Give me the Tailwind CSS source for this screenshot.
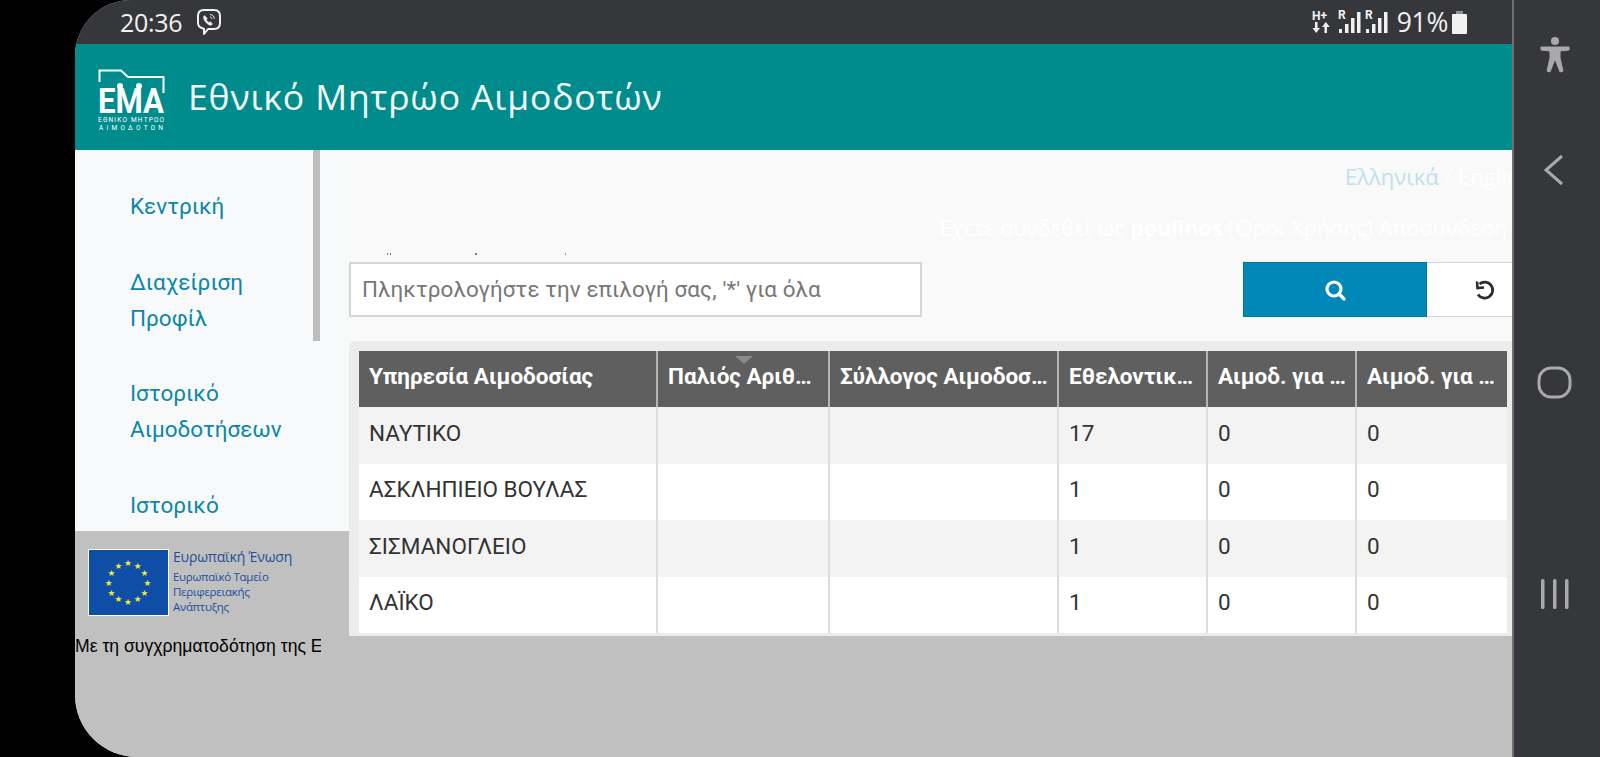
<!DOCTYPE html>
<html lang="el">
<head>
<meta charset="utf-8">
<title>Εθνικό Μητρώο Αιμοδοτών</title>
<script src="https://cdn.jsdelivr.net/npm/@tailwindcss/browser@4"></script>
</head>
<body class="bg-black overflow-hidden font-['Roboto',sans-serif]">
<div class="flex h-[757px] w-[1600px]">
  <div class="w-[75px] shrink-0 bg-black"></div>

  <div class="w-[1437px] shrink-0 flex flex-col overflow-hidden rounded-tl-[56px] rounded-bl-[62px] bg-[#c0c0c0]">
    <!-- status bar -->
    <div class="h-[44px] shrink-0 bg-[#36373b] flex items-center pl-[45px] pr-[45px] text-[#f1f1f1]">
      <span class="text-[25px] font-['Open_Sans',sans-serif] leading-none tracking-[-0.3px]">20:36</span>
      <svg class="ml-[14px]" width="26" height="28" viewBox="0 0 26 28" fill="none" stroke="#f1f1f1" stroke-width="2"><path d="M8 2h10c4 0 6 2 6 6v7c0 4-2 6-6 6h-6l-4 5v-5.300C4 20 2 18.500 2 15V8c0-4 2-6 6-6z" stroke-linejoin="round"/><path d="M8.500 7.500c-1.200 1-1.200 2.500-.2 4.500s3 4 5 5c1.200 .6 2.300 .2 3.200-1l-2.200-2.200-1.500 .7c-1-.5-2-1.700-2.500-2.700l.9-1.300-2.700-3z" fill="#f1f1f1" stroke-width=".6"/><path d="M14 6.500c2.500 0 4.300 1.800 4.300 4.300M14 9c1 0 1.800 .8 1.800 1.800" stroke-width="1"/></svg>
      <div class="ml-auto flex items-center">
        <svg width="20" height="24" viewBox="0 0 20 24" fill="#f1f1f1"><text x="0" y="10" font-size="12" font-weight="700" font-family="Roboto">H+</text><path d="M3 12h2.500v6h2.500L4.200 23 .5 18H3zM12.500 23h2.500v-6h2.800L13.800 12 10 17h2.500z"/></svg>
        <svg class="ml-[6px]" width="23" height="26" viewBox="0 0 23 26" fill="#f1f1f1"><text x="0" y="10" font-size="12" font-weight="700" font-family="Roboto">R</text><rect x="1" y="20" width="3" height="4"/><rect x="7" y="15" width="3.500" height="9"/><rect x="13" y="9" width="3.500" height="15"/><rect x="19" y="3" width="3.500" height="21"/></svg>
        <svg class="ml-[4px]" width="23" height="26" viewBox="0 0 23 26" fill="#f1f1f1"><text x="0" y="10" font-size="12" font-weight="700" font-family="Roboto">R</text><rect x="1" y="20" width="3" height="4"/><rect x="7" y="15" width="3.500" height="9"/><rect x="13" y="9" width="3.500" height="15"/><rect x="19" y="3" width="3.500" height="21"/></svg>
        <span class="ml-[9px] text-[26.500px] font-['Open_Sans',sans-serif] leading-none tracking-[-0.3px]">91%</span>
        <svg class="ml-[4px]" width="15" height="23" viewBox="0 0 15 23"><rect x="4" y="0" width="7" height="3" fill="#8f8f92"/><rect x="0" y="3" width="15" height="20" rx="1" fill="#f1f1f1"/></svg>
      </div>
    </div>

    <!-- header -->
    <div class="h-[106px] shrink-0 bg-[#008c8c] flex items-center pl-[23px]">
      <svg width="68" height="66" viewBox="0 0 68 66" class="shrink-0">
        <path d="M1.500 18V6.500H23l7 6.500h35.500v16" fill="none" stroke="#fff" stroke-width="2"/>
        <text x="0" y="49" fill="#fff" font-size="35" font-weight="700" font-family="Roboto" textLength="66" lengthAdjust="spacingAndGlyphs">EMA</text>
        <circle cx="22" cy="22" r="3" fill="#fff"/><circle cx="41" cy="22" r="3" fill="#fff"/>
        <text x="0" y="58" fill="#fff" font-size="6.500" font-family="Roboto" textLength="66">ΕΘΝΙΚΟ ΜΗΤΡΩΟ</text>
        <text x="1" y="65.500" fill="#fff" font-size="6.500" font-family="Roboto" textLength="64">ΑΙΜΟΔΟΤΩΝ</text>
      </svg>
      <h1 class="ml-[22px] text-[35.500px] text-[#f2fbfb] font-['Open_Sans',sans-serif] leading-none tracking-[0.85px]">Εθνικό Μητρώο Αιμοδοτών</h1>
    </div>

    <!-- body -->
    <div class="flex flex-1 min-h-0">
      <aside class="w-[274px] shrink-0 flex flex-col">
        <div class="relative h-[381px] shrink-0 bg-[#f8f9fb] overflow-hidden pl-[55px] pt-[38px] text-[#0b87a9] text-[22.500px] leading-[36px]">
          <div class="flex flex-col gap-[39.500px]">
            <a class="block">Κεντρική</a>
            <a class="block">Διαχείριση<br>Προφίλ</a>
            <a class="block">Ιστορικό<br>Αιμοδοτήσεων</a>
            <a class="block">Ιστορικό<br>Αιτήσεων</a>
          </div>
          <div class="absolute left-[238px] top-0 w-[7px] h-[191px] bg-[#bdbdbd]"></div>
        </div>
        <div class="flex-1 bg-[#c0c0c0]">
          <div class="flex pl-[13px] pt-[18px]">
            <svg width="81" height="67" viewBox="0 0 81 67" class="shrink-0 border border-white bg-[#0f4ea6]">
              <g fill="#f5e83a" font-size="9" text-anchor="middle" font-family="DejaVu Sans">
                <text x="40" y="17">★</text><text x="50" y="20">★</text><text x="57" y="27">★</text><text x="60" y="37">★</text><text x="57" y="47">★</text><text x="50" y="54">★</text><text x="40" y="57">★</text><text x="30" y="54">★</text><text x="23" y="47">★</text><text x="20" y="37">★</text><text x="23" y="27">★</text><text x="30" y="20">★</text>
              </g>
            </svg>
            <div class="ml-[4px] text-[#1d4f9c] font-['Open_Sans',sans-serif]">
              <div class="text-[14px] leading-[18px] -mt-[1px] tracking-[-0.2px]">Ευρωπαϊκή Ένωση</div>
              <div class="text-[11.500px] leading-[15px] mt-[3px] tracking-[-0.3px]">Ευρωπαϊκό Ταμείο<br>Περιφερειακής<br>Ανάπτυξης</div>
            </div>
          </div>
          <div class="mt-[20px] w-[246px] overflow-hidden whitespace-nowrap text-[17.600px] leading-[20px] text-black font-['Liberation_Sans',sans-serif]">Με τη συγχρηματοδότηση της Ευρωπαϊκής Ένωσης</div>
        </div>
      </aside>

      <main class="flex-1 min-w-0">
        <div class="relative h-[486px] bg-[#f9f9f9] overflow-hidden">
          <div class="h-[112px] relative">
            <div class="absolute left-[996px] top-[13px] whitespace-nowrap text-[22px] leading-[26px] text-[#bde3e6] font-['Open_Sans',sans-serif]">Ελληνικά <span class="text-white">/ English</span></div>
            <div class="absolute left-[589px] top-[65px] whitespace-nowrap text-[21.600px] leading-[26px] text-white font-['Open_Sans',sans-serif]">Έχετε συνδεθεί ως <b>poulinos</b> (Όροι Χρήσης) Αποσύνδεση</div>
            <div class="absolute left-[38px] top-[103px] w-[4px] h-[2px] border-x border-[#777]"></div>
            <div class="absolute left-[126px] top-[103px] w-[2px] h-[2px] bg-[#777]"></div>
            <div class="absolute left-[216px] top-[103px] w-[1px] h-[2px] bg-[#999]"></div>
          </div>
          <div class="flex h-[55px]">
            <div class="w-[573px] h-full border-2 border-[#d5d5d5] bg-white flex items-center pl-[11px] pt-[1px] text-[22.400px] text-[#777] tracking-[0.1px]">Πληκτρολογήστε την επιλογή σας, '*' για όλα</div>
            <button class="ml-[321px] w-[184px] h-full bg-[#0088b9] border border-[#00779f] flex items-center justify-center pt-[1px]">
              <svg width="22" height="22" viewBox="0 0 22 22" fill="none" stroke="#fff" stroke-width="3.200"><circle cx="10" cy="10" r="7"/><path d="M15 15l5 5" stroke-linecap="round"/></svg>
            </button>
            <button class="flex-1 h-full bg-white border-y border-[#d5d5d5] flex items-center justify-start pl-[47px] pt-[1px]">
              <svg width="22" height="22" viewBox="0 0 22 22" fill="none" stroke="#2b2b2b" stroke-width="2.800"><path d="M5.500 5A8 8 0 1 1 4 15.500"/><path d="M3 2.500l.5 6.500 6.500-.5" stroke-width="2.600"/></svg>
            </button>
          </div>
          <div class="mt-[24px] h-[295px] bg-[#ececec] rounded-tl-[6px] pl-[10px] pt-[10px] relative">
            <table class="table-fixed border-collapse text-[22.500px] text-[#333] w-[1148px]">
              <colgroup><col class="w-[298px]"><col class="w-[172px]"><col class="w-[229px]"><col class="w-[149px]"><col class="w-[149px]"><col class="w-[151px]"></colgroup>
              <thead>
                <tr class="h-[56px] bg-[#5f5f5f] text-white text-left font-bold">
                  <th class="px-[10px] pb-[5px] truncate border-r-2 border-[#b5b5b5]">Υπηρεσία Αιμοδοσίας</th>
                  <th class="px-[10px] pb-[5px] truncate border-r-2 border-[#b5b5b5]">Παλιός Αριθμός</th>
                  <th class="pl-[10px] pr-[4px] pb-[5px] truncate border-r-2 border-[#b5b5b5]">Σύλλογος Αιμοδοσίας</th>
                  <th class="px-[10px] pb-[5px] truncate border-r-2 border-[#b5b5b5]">Εθελοντικές</th>
                  <th class="pl-[10px] pr-[8px] pb-[5px] truncate border-r-2 border-[#b5b5b5]">Αιμοδ. για Ασθενή</th>
                  <th class="px-[10px] pb-[5px] truncate">Αιμοδ. για Άλλο</th>
                </tr>
              </thead>
              <tbody>
                <tr class="h-[56.500px] bg-[#f3f3f3]"><td class="px-[10px] pb-[3px] border-r-2 border-[#ddd]">ΝΑΥΤΙΚΟ</td><td class="border-r-2 border-[#ddd]"></td><td class="border-r-2 border-[#ddd]"></td><td class="px-[10px] pb-[3px] border-r-2 border-[#ddd]">17</td><td class="px-[10px] pb-[3px] border-r-2 border-[#ddd]">0</td><td class="px-[10px] pb-[3px]">0</td></tr>
                <tr class="h-[56.500px] bg-white"><td class="px-[10px] pb-[3px] border-r-2 border-[#ddd]">ΑΣΚΛΗΠΙΕΙΟ ΒΟΥΛΑΣ</td><td class="border-r-2 border-[#ddd]"></td><td class="border-r-2 border-[#ddd]"></td><td class="px-[10px] pb-[3px] border-r-2 border-[#ddd]">1</td><td class="px-[10px] pb-[3px] border-r-2 border-[#ddd]">0</td><td class="px-[10px] pb-[3px]">0</td></tr>
                <tr class="h-[56.500px] bg-[#f3f3f3]"><td class="px-[10px] pb-[3px] border-r-2 border-[#ddd]">ΣΙΣΜΑΝΟΓΛΕΙΟ</td><td class="border-r-2 border-[#ddd]"></td><td class="border-r-2 border-[#ddd]"></td><td class="px-[10px] pb-[3px] border-r-2 border-[#ddd]">1</td><td class="px-[10px] pb-[3px] border-r-2 border-[#ddd]">0</td><td class="px-[10px] pb-[3px]">0</td></tr>
                <tr class="h-[56.500px] bg-white"><td class="px-[10px] pb-[3px] border-r-2 border-[#ddd]">ΛΑΪΚΟ</td><td class="border-r-2 border-[#ddd]"></td><td class="border-r-2 border-[#ddd]"></td><td class="px-[10px] pb-[3px] border-r-2 border-[#ddd]">1</td><td class="px-[10px] pb-[3px] border-r-2 border-[#ddd]">0</td><td class="px-[10px] pb-[3px]">0</td></tr>
              </tbody>
            </table>
            <div class="absolute left-[386px] top-[15px] w-0 h-0 border-x-[9px] border-x-transparent border-t-[8px] border-t-[#8a8a8a]"></div>
          </div>
        </div>
      </main>
    </div>
  </div>

  <!-- android nav -->
  <div class="flex-1 bg-[#36373b] border-l-2 border-[#6d6e71] relative">
    <svg class="absolute left-[26px] top-[36px]" width="30" height="38" viewBox="0 0 30 38" fill="#a9a9ab"><circle cx="15" cy="5" r="4"/><path d="M1 11h28v3l-9 1v7l3 13-3 1-5-13-5 13-3-1 3-13v-7l-9-1z" stroke="#a9a9ab" stroke-linejoin="round"/></svg>
    <svg class="absolute left-[28px] top-[154px]" width="24" height="32" viewBox="0 0 24 32" fill="none" stroke="#a9a9ab" stroke-width="3"><path d="M20 2L4 16l16 14"/></svg>
    <svg class="absolute left-[23px] top-[366px]" width="35" height="33" viewBox="0 0 35 33" fill="none" stroke="#a9a9ab" stroke-width="3"><rect x="2" y="2" width="31" height="29" rx="12"/></svg>
    <svg class="absolute left-[26px] top-[578px]" width="30" height="32" viewBox="0 0 30 32" fill="#a9a9ab"><rect x="1" y="1" width="3.500" height="30" rx="1.500"/><rect x="13" y="1" width="3.500" height="30" rx="1.500"/><rect x="25" y="1" width="3.500" height="30" rx="1.500"/></svg>
  </div>
</div>
</body>
</html>
